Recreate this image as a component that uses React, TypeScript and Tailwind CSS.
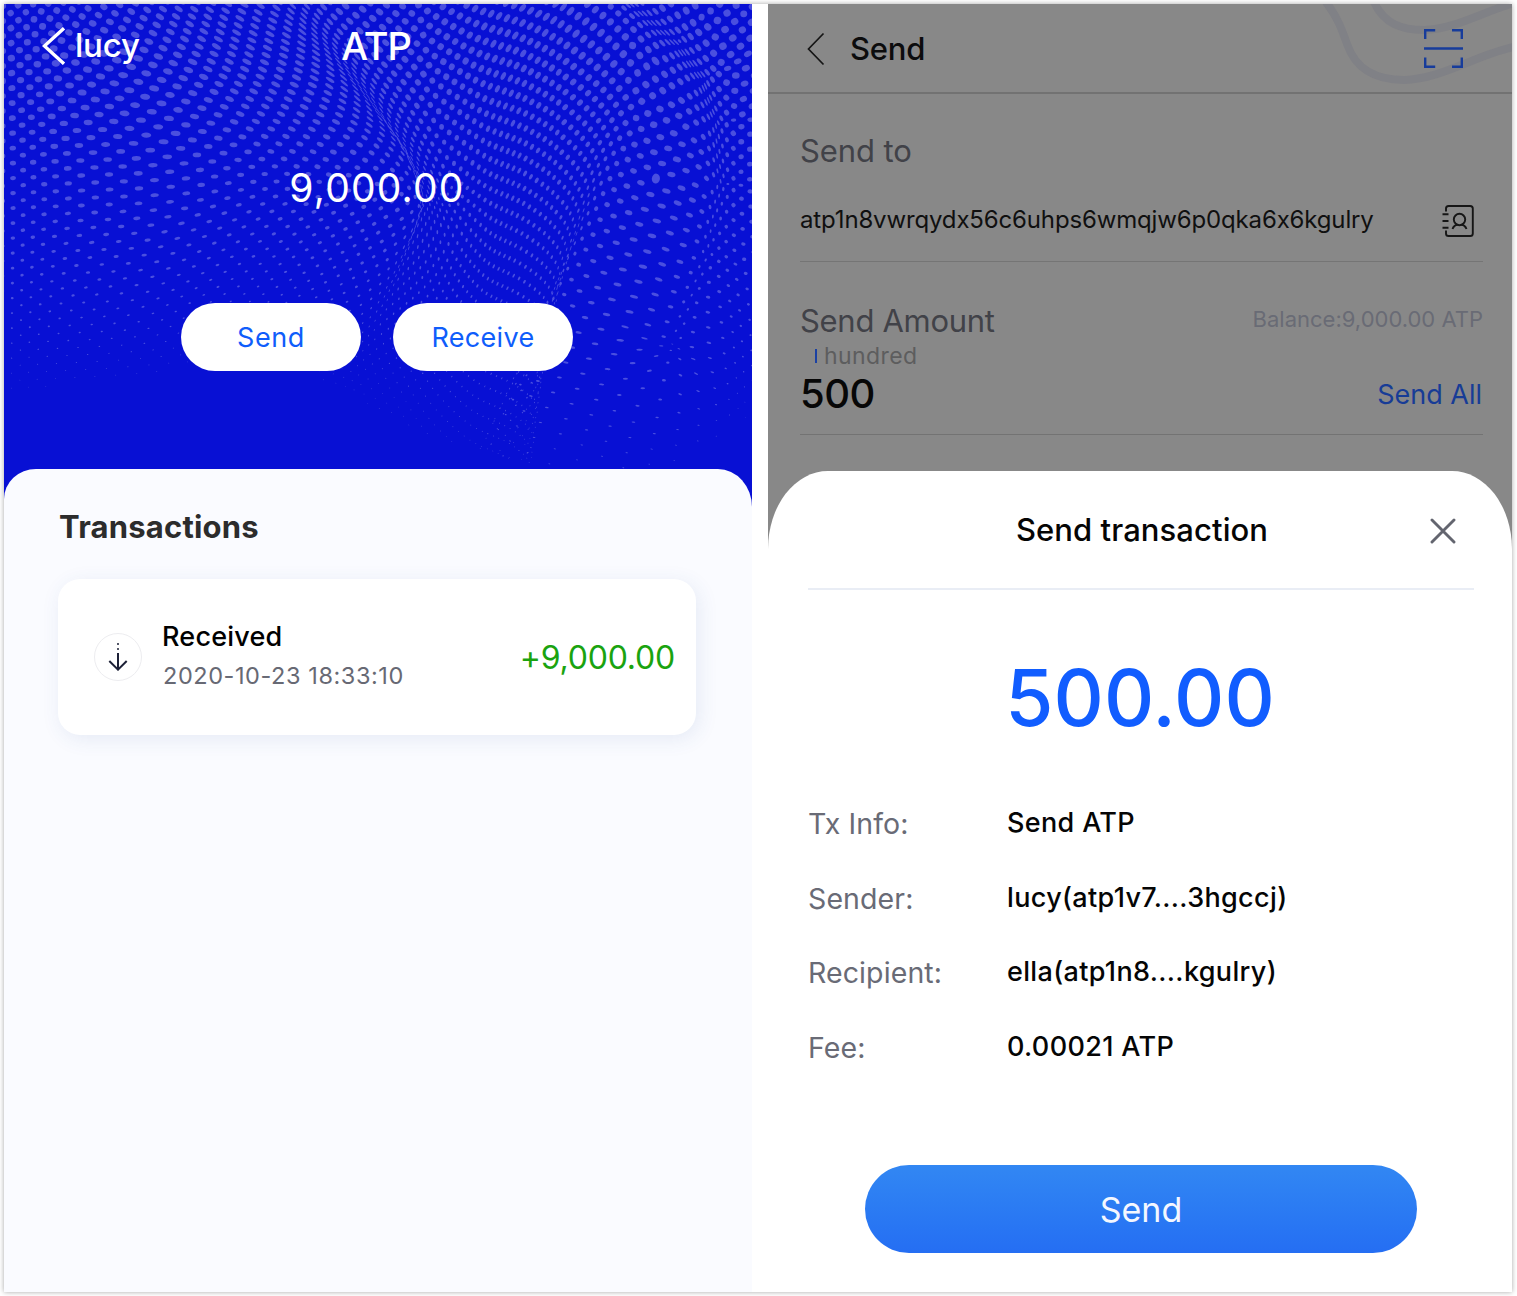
import React from "react";

type Pt = [number, number];

const HERO_W = 748;
const HERO_H = 504;

/* Smooth one-dimensional curve through the given knots (Catmull-Rom). */
function curve(knots: Pt[], x: number) {
  if (x <= knots[0][0]) return knots[0][1];
  const last = knots.length - 1;
  if (x >= knots[last][0]) return knots[last][1];
  let i = 0;
  while (x > knots[i + 1][0]) i++;
  const [x1, y1] = knots[i];
  const [x2, y2] = knots[i + 1];
  const [x0, y0] = knots[Math.max(0, i - 1)];
  const [x3, y3] = knots[Math.min(last, i + 2)];
  const h = x2 - x1;
  const m1 = x2 === x0 ? 0 : ((y2 - y0) / (x2 - x0)) * h;
  const m2 = x3 === x1 ? 0 : ((y3 - y1) / (x3 - x1)) * h;
  const t = (x - x1) / h;
  const t2 = t * t;
  const t3 = t2 * t;
  return (2 * t3 - 3 * t2 + 1) * y1 + (t3 - 2 * t2 + t) * m1 + (3 * t2 - 2 * t3) * y2 + (t3 - t2) * m2;
}

/* Horizontal shear of the columns, scaled by depth. */
const SHEAR: Pt[] = [[0, 0], [37, 0.1], [75, 0.3], [112, 0.55], [150, 0.72], [200, 0.85], [240, 0.89], [280, 0.85], [325, 0.56], [380, 0.34], [440, 0.18], [500, 0.06], [560, 0]];
const DEPTH: Pt[] = [[-200, -120], [0, 0], [100, 100], [150, 144], [200, 156], [260, 128], [330, 82], [420, 40], [520, 20]];
const LOWER: Pt[] = [[430, 0], [500, -0.03], [560, -0.1], [600, -0.26], [640, -0.5], [680, -0.28], [720, -0.02], [748, 0]];
const LIFT: Pt[] = [[0, 0], [80, -5], [150, -12], [230, -8], [310, 8], [400, 30], [460, 16], [520, -22], [570, -44], [620, -50], [670, -28], [715, -6], [748, 0]];

/* Creases where the sheet is squeezed across the line. */
const CREASES: { line: Pt[]; strength: number; width: number }[] = [
  { line: [[285, -20], [330, 45], [372, 105], [405, 150], [432, 192]], strength: 0.35, width: 36 },
  { line: [[590, -30], [635, 8], [672, 40], [698, 75], [712, 120], [716, 180], [702, 250], [670, 340]], strength: 0.68, width: 42 },
];

function nearest(line: Pt[], x: number, y: number): Pt {
  let best = Infinity;
  let out: Pt = line[0];
  for (let i = 0; i < line.length - 1; i++) {
    const [ax, ay] = line[i];
    const [bx, by] = line[i + 1];
    const dx = bx - ax;
    const dy = by - ay;
    const t = Math.max(0, Math.min(1, ((x - ax) * dx + (y - ay) * dy) / (dx * dx + dy * dy)));
    const px = ax + dx * t;
    const py = ay + dy * t;
    const d = (x - px) ** 2 + (y - py) ** 2;
    if (d < best) {
      best = d;
      out = [px, py];
    }
  }
  return out;
}

function warp(sx: number, sy: number): Pt {
  const below = Math.max(0, sy - 130);
  let x = sx + curve(SHEAR, sx) * curve(DEPTH, sy) + (curve(LOWER, sx) * (below * below)) / (below + 40);
  let y = sy + curve(LIFT, sx);
  for (const f of CREASES) {
    const [px, py] = nearest(f.line, x, y);
    const dx = x - px;
    const dy = y - py;
    const k = f.strength * Math.exp(-(dx * dx + dy * dy) / (f.width * f.width));
    x -= dx * k;
    y -= dy * k;
  }
  return [x, y];
}

const FADE: Pt[] = [[0, 415], [150, 395], [250, 370], [330, 410], [430, 465], [560, 500], [660, 495], [748, 440]];

function buildDots() {
  const step = 15;
  const parts: string[] = [];
  for (let j = -20; j < 84; j++) {
    for (let i = -3; i < 54; i++) {
      const sx = i * step - 1 + (j % 2 ? step / 2 : 0);
      const sy = 2 + (j * step) / 2;
      const [x, y] = warp(sx, sy);
      if (x < -6 || x > HERO_W + 6 || y < -6 || y > HERO_H) continue;
      const e = 0.8;
      const [x1, y1] = warp(sx + e, sy);
      const [x2, y2] = warp(sx, sy + e);
      const a = (x1 - x) / e;
      const b = (x2 - x) / e;
      const c = (y1 - y) / e;
      const d = (y2 - y) / e;
      const end = curve(FADE, x);
      const size = 3.2 * Math.min(1, Math.max(0, (end - y) / (end - 60)));
      if (size < 0.25) continue;
      const p = (a + d) / 2;
      const q = (a - d) / 2;
      const r = (c + b) / 2;
      const s = (c - b) / 2;
      const m = Math.hypot(p, s);
      const n = Math.hypot(q, r);
      const rot = ((Math.atan2(s, p) + Math.atan2(r, q)) / 2) * (180 / Math.PI);
      const rx = Math.min(5, size * (m + n));
      const ry = Math.max(0.4, size * Math.abs(m - n));
      const rad = (rot * Math.PI) / 180;
      const ux = rx * Math.cos(rad);
      const uy = rx * Math.sin(rad);
      const arc = `a${rx.toFixed(2)} ${ry.toFixed(2)} ${rot.toFixed(1)} 1 0 `;
      parts.push(
        `M${(x - ux).toFixed(2)} ${(y - uy).toFixed(2)}${arc}${(2 * ux).toFixed(2)} ${(2 * uy).toFixed(2)}${arc}${(-2 * ux).toFixed(2)} ${(-2 * uy).toFixed(2)}z`,
      );
    }
  }
  return parts.join("");
}

const DOTS = buildDots();

function WalletPanel() {
  return (
    <section className="flex h-[1288px] w-[748px] flex-col bg-[#fafbff]">
      <div className="relative h-[465px] text-white">
        <svg className="absolute left-0 top-0 bg-[#0810d4]" width={HERO_W} height={HERO_H} viewBox={`0 0 ${HERO_W} ${HERO_H}`}>
          <path d={DOTS} fill="#4a4fdf" />
        </svg>
        <div className="relative flex h-full flex-col">
          <div className="grid h-[84px] grid-cols-3 font-medium">
            <div className="flex items-center pl-[38px]">
              <svg width="24" height="38" viewBox="0 0 24 38" fill="none" stroke="#fff" strokeWidth="3.4">
                <path d="M22 1.2 2.4 19 22 36.8" />
              </svg>
              <span className="-mt-0.5 ml-[9px] text-[33px] leading-10 tracking-[-0.2px]">lucy</span>
            </div>
            <div className="flex items-center justify-center pr-1 text-[38px] tracking-[-1.2px]">ATP</div>
          </div>
          <div className="mt-[76px] flex h-12 items-center justify-center pr-0.5 text-[39px] tracking-[1.2px]">9,000.00</div>
          <div className="mt-[91px] flex justify-center gap-8 pr-[2px] text-[27px] text-[#0f5dfb]">
            <button className="h-[68px] w-[180px] rounded-full bg-white pt-0.5 tracking-[0.6px]">Send</button>
            <button className="h-[68px] w-[180px] rounded-full bg-white pt-0.5 tracking-[0.3px]">Receive</button>
          </div>
        </div>
      </div>
      <div className="relative flex-1 rounded-tl-[32px_30px] rounded-tr-[34px_38px] bg-[#fafbff] px-[54px]">
        <h2 className="mt-9 h-11 pl-px text-[31px] font-bold leading-[44px] tracking-[0.2px] text-[#2c2c2c]">Transactions</h2>
        <div className="mt-[30px] flex h-[156px] w-[638px] items-center rounded-[22px] bg-white pl-9 pr-[21px] shadow-[3px_4px_20px_rgba(50,90,160,0.1)]">
          <div className="flex size-12 items-center justify-center rounded-full border border-[#ededf0]">
            <svg width="20" height="30" viewBox="0 0 20 30" fill="none" stroke="#1c2036" strokeWidth="2">
              <path d="M10 1v2M10 6v2" stroke="#555868" />
              <path d="M10 11v17.5M1.3 19 10 27.7 18.7 19" />
            </svg>
          </div>
          <div className="ml-[20px]">
            <div className="h-10 text-[27px] font-medium leading-10 tracking-[0.2px] text-black">Received</div>
            <div className="h-10 pl-px text-[23.5px] leading-[38px] tracking-[0.57px] text-[#676974]">2020-10-23 18:33:10</div>
          </div>
          <div className="ml-auto pt-px text-[32px] tracking-[-0.2px] text-[#1aa30f]">+9,000.00</div>
        </div>
      </div>
    </section>
  );
}

function Row({ label, value }: { label: string; value: string }) {
  return (
    <div className="flex h-[74.5px] items-center">
      <span className="w-[199px] pt-0.5 text-[28.5px] tracking-[0.1px] text-[#696b76]">{label}</span>
      <span className="text-[27px] font-medium tracking-[0.35px] text-[#050505]">{value}</span>
    </div>
  );
}

function SendPanel() {
  return (
    <section className="flex h-[1288px] w-[744px] flex-col bg-[#888888]">
      <header className="relative flex h-[90px] items-center border-b-2 border-[#727272] pl-[39px] pr-[48px]">
        <svg className="absolute right-0 top-0" width="200" height="84" viewBox="0 0 200 84" fill="none" stroke="#808186" strokeWidth="8">
          <path d="M14 -2C26 14 30 26 35 40C44 66 64 76 92 76C130 75 166 50 202 43" />
          <path d="M62 -2C72 20 90 26 112 26C144 25 170 8 202 -1" />
        </svg>
        <svg className="mt-0.5" width="18" height="34" viewBox="0 0 18 34" fill="none" stroke="#151515" strokeWidth="1.7">
          <path d="M16.5 1.5 1.5 17l15 15.5" />
        </svg>
        <h1 className="ml-[25px] mt-[3px] text-[31px] font-medium tracking-[-0.2px] text-[#0c0c0d]">Send</h1>
        <svg className="relative ml-auto mt-px" width="41" height="41" viewBox="0 0 41 41" fill="none" stroke="#173c9b" strokeWidth="2.4">
          <path d="M2.2 11V2.2h10M29 2.2h9.8V11M2.2 29.5v9.3h10M29 38.8h9.8v-9.3M1 20.5h39" />
        </svg>
      </header>
      <div className="pl-8 pr-[29px]">
        <div className="mt-[35px] h-[44px] text-[31px] leading-[44px] tracking-[-0.1px] text-[#414248]">Send to</div>
        <div className="mt-[23px] h-[66px] border-b border-[#757575]">
          <div className="flex h-12 items-center justify-between pr-2">
            <span className="text-[24px] leading-8 tracking-[-0.15px] text-[#101010]">atp1n8vwrqydx56c6uhps6wmqjw6p0qka6x6kgulry</span>
            <svg className="mt-0.5" width="34" height="34" viewBox="0 0 34 34" fill="none" stroke="#161616" strokeWidth="1.9">
              <path d="M5 7.6V4.6Q5 2 7.6 2H29.2Q31.8 2 31.8 4.6V29.4Q31.8 32 29.2 32H7.6Q5 32 5 29.4V26.4" />
              <path d="M1.5 10.2h6M1.5 17h6M1.5 23.8h6" />
              <circle cx="18.5" cy="15.5" r="5.7" />
              <path d="M11.5 25Q13 21.2 16.5 20.8M25.5 25Q24 21.2 20.5 20.8" />
            </svg>
          </div>
        </div>
        <div className="mt-[37px] flex h-11 items-center justify-between">
          <span className="text-[31px] tracking-[-0.3px] text-[#414248]">Send Amount</span>
          <span className="-mt-1 text-[22px] text-[#696b75]">Balance:9,000.00 ATP</span>
        </div>
        <div className="flex h-6 items-center pl-[15px] pt-0.5">
          <span className="h-3.5 w-0.5 bg-[#1b41a3]" />
          <span className="ml-[7px] text-[23px] leading-6 tracking-[0.4px] text-[#5d5d5e]">hundred</span>
        </div>
        <div className="flex h-[68px] items-start justify-between border-b border-[#737373]">
          <span className="text-[40px] font-medium leading-[54px] tracking-[-0.5px] text-[#070707]">500</span>
          <span className="pr-px text-[27px] leading-[56px] text-[#173c96]">Send All</span>
        </div>
      </div>
      <div className="mt-9 flex-1 rounded-tl-[60px_78px] rounded-tr-[60px_78px] bg-white pl-10 pr-[38px]">
        <div className="relative flex h-[119px] items-center justify-center border-b-2 border-[#e9edf5] pl-0.5 pt-px text-[31px] font-medium text-[#050505]">
          <span className="tracking-[0.08px]">Send transaction</span>
          <svg className="absolute right-[18px] top-[47px]" width="26" height="26" viewBox="0 0 26 26" fill="none" stroke="#63656f" strokeWidth="2.9" strokeLinecap="round">
            <path d="m2 2 22 22M24 2 2 24" />
          </svg>
        </div>
        <div className="mt-[61px] flex h-[92px] items-center justify-center pr-0.5 text-[78px] font-medium tracking-[0.1px] text-[#115dff]">500.00</div>
        <div className="mt-[43.4px]">
          <Row label="Tx Info:" value="Send ATP" />
          <Row label="Sender:" value="lucy(atp1v7....3hgccj)" />
          <Row label="Recipient:" value="ella(atp1n8....kgulry)" />
          <Row label="Fee:" value="0.00021 ATP" />
        </div>
        <button className="ml-[57px] mt-[80.6px] h-[88px] w-[552px] rounded-full bg-gradient-to-b from-[#3287f3] to-[#256ef3] pt-0.5 text-[34px] tracking-[0px] text-[#f4f7ff]">Send</button>
      </div>
    </section>
  );
}

export default function App() {
  return (
    <main className="h-[1296px] w-[1517px] overflow-hidden bg-white p-1 font-['Inter',sans-serif] [font-feature-settings:'calt'_0]">
      <div className="flex w-[1508px] gap-4 bg-white shadow-[0_0_5px_rgba(0,0,0,0.35)]">
        <WalletPanel />
        <SendPanel />
      </div>
    </main>
  );
}
